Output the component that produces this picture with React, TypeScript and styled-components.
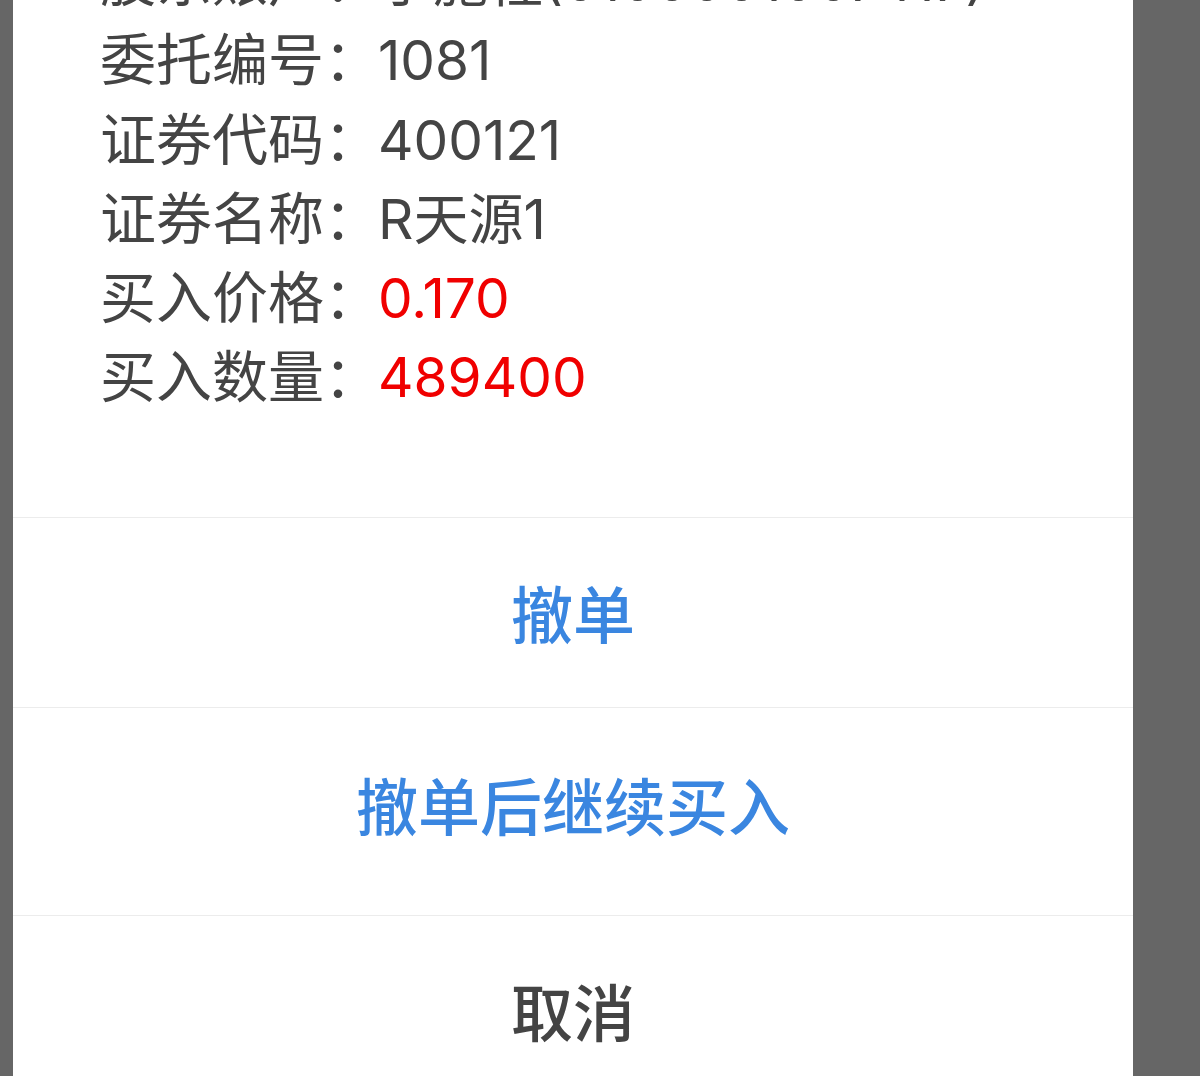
import React from 'react'
import styled, { createGlobalStyle } from 'styled-components'

const GlobalStyle = createGlobalStyle`
  html, body {
    margin: 0;
    padding: 0;
    background: #666666;
    font-family: "Noto Sans CJK SC", sans-serif;
  }
`

const Screen = styled.div`
  height: 1076px;
  overflow: hidden;
  padding-left: 13px;
`

const Sheet = styled.div`
  width: 1120px;
  height: 1076px;
  background: #fff;
  display: flex;
  flex-direction: column;
  overflow: hidden;
`

const Info = styled.div`
  margin-top: -63px;
  padding: 0 0 104px 87px;
`

const Row = styled.div`
  font-size: 56px;
  line-height: 79.3px;
  white-space: nowrap;
  color: #444;
`

const Label = styled.span`
  display: inline-block;
  width: 278px;
`

const Value = styled.span<{ $red?: boolean }>`
  font-family: Inter, "Noto Sans CJK SC", sans-serif;
  font-size: 55px;
  line-height: 1;
  color: ${p => (p.$red ? '#f00000' : '#444')};
`

const Action = styled.div<{ $height: number; $shift?: number; $muted?: boolean }>`
  height: ${p => p.$height}px;
  box-sizing: border-box;
  border-top: 1px solid #ececec;
  padding-bottom: ${p => p.$shift || 0}px;
  display: flex;
  align-items: center;
  justify-content: center;
  font-size: 62px;
  font-weight: 500;
  color: ${p => (p.$muted ? '#444' : '#3a86e0')};
  flex: none;
`

const rows = [
  { label: '股东账户：', value: '于施柱(0100001007417)' },
  { label: '委托编号：', value: '1081' },
  { label: '证券代码：', value: '400121' },
  { label: '证券名称：', value: 'R天源1' },
  { label: '买入价格：', value: '0.170', red: true },
  { label: '买入数量：', value: '489400', red: true },
]

export default function App() {
  return (
    <>
      <GlobalStyle />
      <Screen>
        <Sheet>
          <Info>
            {rows.map(r => (
              <Row key={r.label}>
                <Label>{r.label}</Label>
                <Value $red={r.red}>{r.value}</Value>
              </Row>
            ))}
          </Info>
          <Action $height={190}>撤单</Action>
          <Action $height={208} $shift={14}>撤单后继续买入</Action>
          <Action $height={190} $muted>取消</Action>
        </Sheet>
      </Screen>
    </>
  )
}
